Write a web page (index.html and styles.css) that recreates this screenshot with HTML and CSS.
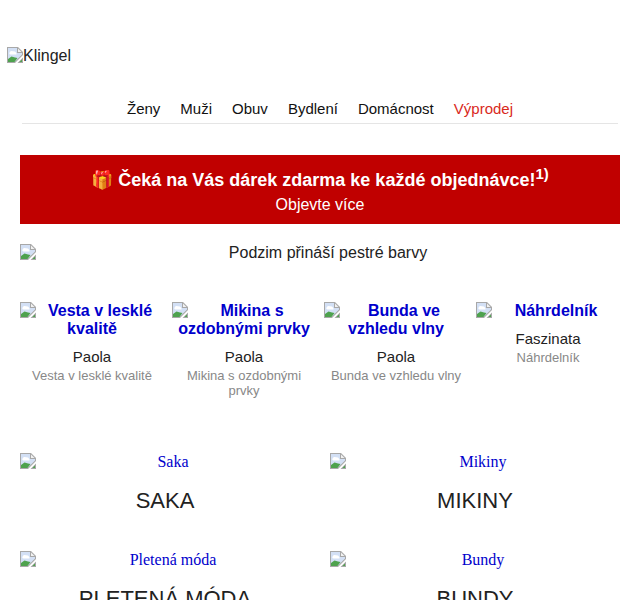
FILE: index.html
```html
<!DOCTYPE html>
<html lang="cs">
  <head>
    <meta charset="UTF-8" />
    <title>Klingel</title>
    <link rel="stylesheet" href="styles.css">
  </head>
  <body>
    <svg class="icon-defs" width="0" height="0">
      <symbol id="broken" viewBox="0 0 16 16">
        <path d="M0 0h11l5 5v3L8 16H0z" fill="#a8a8a8" />
        <path d="M1 1h9v5h5v1.500L7.500 15H1z" fill="#d3e0f5" />
        <path d="M2.500 6c0-1.500 2-2.500 3.500-1.500C7.500 4 9 5 9 6c1 .5 1 1.500 0 1.500H3.500c-1 0-1.500-1-1-1.500z" fill="#fff" />
        <path d="M1 15v-3l3.500-2.500L8 10.500l2.500.5L7.500 15z" fill="#4ea24e" />
        <path d="M11 1.500L14.500 5H11z" fill="#f2f2f2" />
        <path d="M16 10.500V16H10.500z" fill="#a8a8a8" />
        <path d="M15 12.500V15h-2.500z" fill="#4ea24e" />
      </symbol>
    </svg>
    <div class="page">
      <div class="logo">
        <svg class="broken"><use href="#broken" /></svg>Klingel
      </div>
      <nav class="nav">
        <a class="nav-link" href="#">Ženy</a>
        <a class="nav-link" href="#">Muži</a>
        <a class="nav-link" href="#">Obuv</a>
        <a class="nav-link" href="#">Bydlení</a>
        <a class="nav-link" href="#">Domácnost</a>
        <a class="nav-link sale" href="#">Výprodej</a>
      </nav>
      <div class="promo">
        <div class="promo-title">🎁 Čeká na Vás dárek zdarma ke každé objednávce!<sup>1)</sup></div>
        <div class="promo-sub">Objevte více</div>
      </div>
      <div class="hero">
        <svg class="broken"><use href="#broken" /></svg>Podzim přináší pestré barvy
      </div>
      <div class="products">
        <div class="product">
          <a class="product-name" href="#"><svg class="broken"><use href="#broken" /></svg>Vesta v lesklé kvalitě</a>
          <div class="brand">Paola</div>
          <div class="desc">Vesta v lesklé kvalitě</div>
        </div>
        <div class="product">
          <a class="product-name" href="#"><svg class="broken"><use href="#broken" /></svg>Mikina s ozdobnými prvky</a>
          <div class="brand">Paola</div>
          <div class="desc">Mikina s ozdobnými prvky</div>
        </div>
        <div class="product">
          <a class="product-name" href="#"><svg class="broken"><use href="#broken" /></svg>Bunda ve vzhledu vlny</a>
          <div class="brand">Paola</div>
          <div class="desc">Bunda ve vzhledu vlny</div>
        </div>
        <div class="product">
          <a class="product-name" href="#"><svg class="broken"><use href="#broken" /></svg>Náhrdelník</a>
          <div class="brand">Faszinata</div>
          <div class="desc">Náhrdelník</div>
        </div>
      </div>
      <div class="categories">
        <div class="category">
          <a class="category-img" href="#"><svg class="broken"><use href="#broken" /></svg>Saka</a>
          <div class="category-name">SAKA</div>
        </div>
        <div class="category">
          <a class="category-img" href="#"><svg class="broken"><use href="#broken" /></svg>Mikiny</a>
          <div class="category-name">MIKINY</div>
        </div>
        <div class="category">
          <a class="category-img" href="#"><svg class="broken"><use href="#broken" /></svg>Pletená móda</a>
          <div class="category-name">PLETENÁ MÓDA</div>
        </div>
        <div class="category">
          <a class="category-img" href="#"><svg class="broken"><use href="#broken" /></svg>Bundy</a>
          <div class="category-name">BUNDY</div>
        </div>
      </div>
    </div>
  </body>
</html>
```

FILE: styles.css
```css
html,
body {
  height: 600px;
  overflow: hidden;
}
body {
  margin: 0;
  font-family: "Liberation Sans", Arial, sans-serif;
  color: #222;
}
.icon-defs {
  position: absolute;
}
.broken {
  width: 16px;
  height: 16px;
  vertical-align: -2px;
}
.logo {
  padding: 47px 0 0 7px;
  height: 38px;
  font-size: 16px;
  line-height: 18px;
}
.nav {
  display: flex;
  justify-content: center;
  gap: 20px;
  margin: 0 22px;
  padding-top: 15px;
  height: 23px;
  border-bottom: 1px solid #e5e5e5;
  font-size: 15px;
  line-height: 18px;
}
.nav-link {
  color: #111;
  text-decoration: none;
}
.nav-link.sale {
  color: #d9291c;
}
.promo {
  margin: 31px 20px 0;
  height: 69px;
  background: #c00000;
  color: #fff;
  text-align: center;
}
.promo-title {
  padding-top: 13px;
  font-size: 18px;
  font-weight: 700;
  line-height: 24px;
}
.promo-title sup {
  font-size: 15px;
  line-height: 0;
}
.promo-sub {
  margin-top: 4px;
  font-size: 16px;
  line-height: 18px;
}
.hero {
  margin: 20px 20px 0;
  font-size: 16px;
  line-height: 18px;
  text-align: center;
}
.hero .broken {
  float: left;
}
.products {
  display: grid;
  grid-template-columns: repeat(4, 144px);
  gap: 8px;
  margin: 40px 20px 0;
  text-align: center;
}
.product-name {
  display: block;
  color: #00c;
  font-size: 16px;
  font-weight: 700;
  line-height: 18px;
  text-decoration: none;
}
.product-name .broken {
  float: left;
}
.brand {
  margin-top: 10px;
  font-size: 15px;
  line-height: 18px;
}
.desc {
  margin-top: 2px;
  color: #888;
  font-size: 13px;
  line-height: 15px;
}
.categories {
  display: grid;
  grid-template-columns: 290px 290px;
  column-gap: 20px;
  row-gap: 37px;
  margin: 55px 20px 0;
  text-align: center;
}
.category-img {
  display: block;
  color: #00c;
  font-family: "Liberation Serif", serif;
  font-size: 16px;
  line-height: 18px;
  text-decoration: none;
  text-align: center;
}
.category-img .broken {
  float: left;
}
.category-name {
  margin-top: 17px;
  font-size: 22px;
  line-height: 26px;
}
```
